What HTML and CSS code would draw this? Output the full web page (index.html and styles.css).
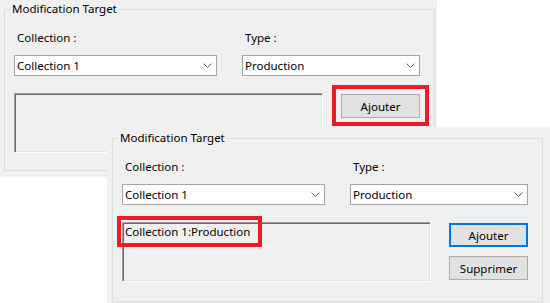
FILE: index.html
```html
<!DOCTYPE html>
<html lang="fr">
<head>
  <meta charset="UTF-8">
  <title>Modification Target</title>
  <link rel="stylesheet" href="styles.css">
</head>
<body>

  <div class="desk">

    <!-- Before: empty list -->
    <div class="window win-back">
      <fieldset class="group">
        <legend>Modification Target</legend>
        <div class="fields">
          <label class="field-label">Collection :</label>
          <label class="field-label">Type :</label>
          <div class="combo">
            <span>Collection 1</span>
            <svg class="chevron" width="9" height="5" viewBox="0 0 9 5"><polyline points="0.5,0.5 4.5,4.5 8.5,0.5"/></svg>
          </div>
          <div class="combo">
            <span>Production</span>
            <svg class="chevron" width="9" height="5" viewBox="0 0 9 5"><polyline points="0.5,0.5 4.5,4.5 8.5,0.5"/></svg>
          </div>
        </div>
        <div class="lower">
          <div class="listbox"></div>
          <div class="buttons">
            <button class="btn">Ajouter</button>
            <button class="btn">Supprimer</button>
          </div>
        </div>
      </fieldset>
      <div class="highlight hl-add"></div>
    </div>

    <!-- After: item added -->
    <div class="window win-front">
      <fieldset class="group group-front">
        <legend>Modification Target</legend>
        <div class="fields">
          <label class="field-label">Collection :</label>
          <label class="field-label">Type :</label>
          <div class="combo">
            <span>Collection 1</span>
            <svg class="chevron" width="9" height="5" viewBox="0 0 9 5"><polyline points="0.5,0.5 4.5,4.5 8.5,0.5"/></svg>
          </div>
          <div class="combo">
            <span>Production</span>
            <svg class="chevron" width="9" height="5" viewBox="0 0 9 5"><polyline points="0.5,0.5 4.5,4.5 8.5,0.5"/></svg>
          </div>
        </div>
        <div class="lower">
          <div class="listbox">
            <div class="list-item">Collection 1:Production</div>
          </div>
          <div class="buttons">
            <button class="btn btn-focus">Ajouter</button>
            <button class="btn">Supprimer</button>
          </div>
        </div>
      </fieldset>
      <div class="highlight hl-item"></div>
    </div>

  </div>

</body>
</html>
```

FILE: styles.css
```css
body {
  margin: 0;
  background-color: #fff;
  font-family: "Noto Sans", "DejaVu Sans", sans-serif;
  font-size: 11.5px;
  color: #000;
}

.desk {
  position: relative;
  width: 550px;
  height: 303px;
  overflow: hidden;
}

/* dialog windows sit on a free canvas */
.window {
  position: absolute;
  box-sizing: border-box;
  background-color: #f0f0f0;
}

.win-back {
  left: 0;
  top: 0;
  width: 437px;
  height: 177px;
  padding: 1px 0 0 4px;
}

.win-front {
  left: 107px;
  top: 127px;
  width: 443px;
  height: 176px;
  padding: 3px 0 0 5px;
}

.group {
  box-sizing: border-box;
  width: 431px;
  height: 170px;
  margin: 0;
  padding: 0;
  min-width: 0;
  border: 1px solid #dcdcdc;
}

.group-front {
  height: 172px;
}

.group legend {
  margin-left: 5px;
  padding: 0 2px;
  line-height: 16px;
}

.fields {
  display: grid;
  grid-template-columns: 203px 178px;
  column-gap: 25px;
  row-gap: 9px;
  margin: 13px 0 0 9px;
}

.field-label {
  padding-left: 3px;
  line-height: 16px;
}

.combo {
  box-sizing: border-box;
  height: 21px;
  display: flex;
  align-items: center;
  justify-content: space-between;
  padding: 0 4px 0 2px;
  background-color: #fff;
  border: 1px solid #a5a5a5;
}

.chevron polyline {
  fill: none;
  stroke: #606060;
  stroke-width: 1;
}

.lower {
  display: flex;
  align-items: flex-start;
  gap: 18px;
  margin: 17px 0 0 9px;
}

.listbox {
  box-sizing: border-box;
  width: 309px;
  height: 60px;
  border: 1px solid;
  border-color: #a0a0a0 #fff #fff #a0a0a0;
  box-shadow: inset 1px 1px 0 #696969, inset -1px -1px 0 #e3e3e3;
  padding: 1px 0 0 2px;
}

.list-item {
  line-height: 16px;
}

.buttons {
  display: flex;
  flex-direction: column;
  gap: 9px;
  margin-top: 1px;
}

.btn {
  box-sizing: border-box;
  width: 79px;
  height: 24px;
  padding: 0;
  font-family: inherit;
  font-size: 11.5px;
  color: #000;
  background-color: #e1e1e1;
  border: 1px solid #adadad;
}

.btn-focus {
  border-color: #0078d7;
  box-shadow: inset 0 0 0 1px #0078d7;
}

/* red annotation boxes drawn over the dialogs */
.highlight {
  position: absolute;
  box-sizing: border-box;
  border: 4px solid #ed1c24;
}

.hl-add {
  left: 332px;
  top: 85px;
  width: 97px;
  height: 41px;
}

.hl-item {
  left: 10px;
  top: 89px;
  width: 145px;
  height: 31px;
}
```
